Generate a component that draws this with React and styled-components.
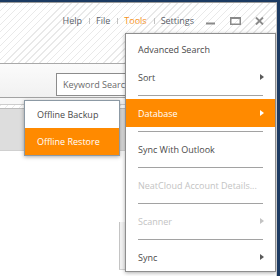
import React from 'react'
import styled, { createGlobalStyle, css } from 'styled-components'

const GlobalStyle = createGlobalStyle`
  * { box-sizing: border-box; }
  html, body { margin: 0; padding: 0; overflow: hidden; }
  body {
    font-family: 'Open Sans', 'Noto Sans', sans-serif;
    font-size: 9px;
    color: #4a4a4a;
  }
`

const ORANGE = '#ff8a00'

const hatch = css`
  background-color: #fff;
  background-image: repeating-linear-gradient(135deg, #e9e9e9 0 1px, transparent 1px 5px);
`

const Screen = styled.div`
  width: 280px;
  height: 276px;
  display: flex;
  padding: 2px 3px 0 0;
  background: #1b3a62;
`

const Window = styled.div`
  position: relative;
  flex: 1;
  display: flex;
  flex-direction: column;
  background: #fff;
  border-top: 1px solid #9a9a9a;
  border-right: 1px solid #c9c9c9;
  overflow: hidden;
`

const Header = styled.header`
  ${hatch};
  height: 61px;
  display: flex;
  justify-content: flex-end;
  align-items: flex-start;
  padding: 11px 12px 0 0;
  border-bottom: 1px solid #a9a9a9;
`

const Nav = styled.nav`
  display: flex;
  align-items: center;
  line-height: 14px;
`

const NavLink = styled.span`
  color: ${(p) => (p.$active ? '#f7941d' : '#5b5f6a')};
`

const NavSep = styled.span`
  width: 1px;
  height: 6px;
  margin: 0 6px 0 7px;
  background: #c2c2c2;
`

const WinButtons = styled.div`
  display: flex;
  gap: 14px;
  margin: 3px 0 0 12px;
`

const Toolbar = styled.div`
  height: 34px;
  padding: 9px 0 0 56px;
  background: linear-gradient(#fbfbfb, #f1f1f1);
  border-bottom: 1px solid #a3a3a3;
`

const SearchBox = styled.div`
  width: 130px;
  height: 23px;
  padding-left: 6px;
  display: flex;
  align-items: center;
  background: #fff;
  border: 1px solid #8c8c8c;
  color: #6a6a6a;
`

const Band = styled.div`
  height: 6px;
  background: #f8f8f8;
`

const Strip = styled.div`
  ${hatch};
  height: 5px;
  border-top: 1px solid #cdcdcd;
  border-bottom: 1px solid #bdbdbd;
`

const GrayPanel = styled.div`
  height: 42px;
  background: #dddddd;
  border-bottom: 1px solid #d0d0d0;
`

const Content = styled.div`
  flex: 1;
  padding: 71px 0 0 119px;
`

const FaintCard = styled.div`
  height: 48px;
  border-left: 1px solid #c4c4c4;
  border-bottom: 1px solid #d2d2d2;
  background: linear-gradient(90deg, #f2f2f2, #fafafa);
`

const Menu = styled.ul`
  position: absolute;
  margin: 0;
  padding: ${(p) => p.$pad || '0'};
  list-style: none;
  background: #fff;
  border: 1px solid ${(p) => p.$border || '#8e8e8e'};
  box-shadow: 0 1px 4px rgba(0, 0, 0, 0.32);
`

const MainMenu = styled(Menu)`
  top: 30px;
  left: 125px;
  right: 0;
`

const SubMenu = styled(Menu)`
  top: 97px;
  left: 24px;
  width: 96px;
`

const Item = styled.li`
  height: ${(p) => p.$h || 28}px;
  display: flex;
  align-items: center;
  justify-content: space-between;
  padding: 0 11px 0 12px;
  white-space: nowrap;
  color: ${(p) => (p.$active ? '#fff' : p.$disabled ? '#c3c3c3' : '#4a4a4a')};
  background: ${(p) => (p.$active ? ORANGE : 'transparent')};
`

const Arrow = styled.span`
  width: 0;
  height: 0;
  border-top: 3.5px solid transparent;
  border-bottom: 3.5px solid transparent;
  border-left: 4px solid ${(p) => p.$color};
`

const Separator = styled.li`
  height: 1px;
  margin: 4px 12px 3px;
  background: #a2a2a2;
`

const MinIcon = () => (
  <svg width="10" height="8" viewBox="0 0 10 8">
    <rect x="0" y="5.5" width="9" height="2" fill="#8a8a8a" />
  </svg>
)

const MaxIcon = () => (
  <svg width="11" height="8" viewBox="0 0 11 8">
    <rect x="0.75" y="0.75" width="9.5" height="6.5" fill="none" stroke="#8a8a8a" strokeWidth="1.5" />
    <rect x="0" y="0" width="11" height="2" fill="#8a8a8a" />
  </svg>
)

const CloseIcon = () => (
  <svg width="9" height="8" viewBox="0 0 9 8">
    <path d="M1 0.5 L8 7.5 M8 0.5 L1 7.5" stroke="#8a8a8a" strokeWidth="1.8" />
  </svg>
)

const menu = [
  { label: 'Advanced Search' },
  { label: 'Sort', sub: true },
  'sep',
  { label: 'Database', sub: true, active: true },
  'sep',
  { label: 'Sync With Outlook' },
  'sep',
  { label: 'NeatCloud Account Details...', disabled: true },
  'sep',
  { label: 'Scanner', sub: true, disabled: true },
  'sep',
  { label: 'Sync', sub: true },
]

const arrowColor = (item) => (item.active ? '#fff' : item.disabled ? '#c3c3c3' : '#5a5a5a')

const App = () => {
  return (
    <>
      <GlobalStyle />
      <Screen>
        <Window>
          <Header>
            <Nav>
              <NavLink>Help</NavLink>
              <NavSep />
              <NavLink>File</NavLink>
              <NavSep />
              <NavLink $active>Tools</NavLink>
              <NavSep />
              <NavLink>Settings</NavLink>
            </Nav>
            <WinButtons>
              <MinIcon />
              <MaxIcon />
              <CloseIcon />
            </WinButtons>
          </Header>
          <Toolbar>
            <SearchBox>Keyword Search</SearchBox>
          </Toolbar>
          <Band />
          <Strip />
          <GrayPanel />
          <Content>
            <FaintCard />
          </Content>

          <MainMenu $pad="1px 0 0">
            {menu.map((item, i) =>
              item === 'sep' ? (
                <Separator key={i} />
              ) : (
                <Item key={i} $active={item.active} $disabled={item.disabled}>
                  {item.label}
                  {item.sub && <Arrow $color={arrowColor(item)} />}
                </Item>
              )
            )}
          </MainMenu>

          <SubMenu $border="#8c99a4">
            <Item $h={27}>Offline Backup</Item>
            <Item $h={27} $active>Offline Restore</Item>
          </SubMenu>
        </Window>
      </Screen>
    </>
  )
}

export default App
